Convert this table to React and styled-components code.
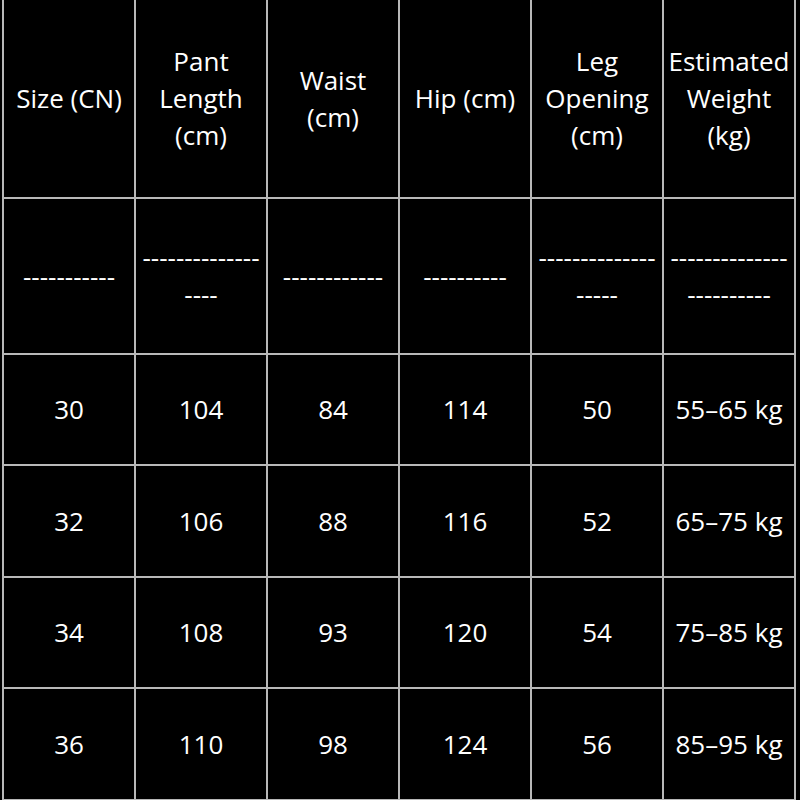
import React from "react";
import styled, { createGlobalStyle } from "styled-components";

const GlobalStyle = createGlobalStyle`
  html, body {
    margin: 0;
    padding: 0;
    background: #000;
  }
  body {
    width: 800px;
    height: 800px;
    overflow: hidden;
    font-family: "Open Sans", "Noto Sans", sans-serif;
  }
`;

const headers = [
  ["Size (CN)"],
  ["Pant", "Length", "(cm)"],
  ["Waist", "(cm)"],
  ["Hip (cm)"],
  ["Leg", "Opening", "(cm)"],
  ["Estimated", "Weight", "(kg)"],
];

// dashes as they wrap in each cell of the separator row
const dashes = [[11], [14, 4], [12], [10], [14, 5], [14, 10]];

const rows = [
  ["30", "104", "84", "114", "50", "55–65 kg"],
  ["32", "106", "88", "116", "52", "65–75 kg"],
  ["34", "108", "93", "120", "54", "75–85 kg"],
  ["36", "110", "98", "124", "56", "85–95 kg"],
];

const rowHeights = [111, 112, 111, 112];

const Wrapper = styled.div`
  width: 800px;
  height: 800px;
  padding-left: 2px;
  box-sizing: border-box;
  background: #000;
`;

const Table = styled.table`
  width: 794px;
  border-collapse: collapse;
  table-layout: fixed;
  color: #fff;
  font-size: 26px;
  line-height: 37px;
`;

const Row = styled.tr`
  height: ${(p) => p.$h}px;
`;

const Cell = styled.td`
  padding: 0;
  text-align: center;
  vertical-align: middle;
  border-left: 2px solid #b8b8b8;
  border-right: 2px solid #b8b8b8;
  border-bottom: 2px solid #b8b8b8;
  white-space: nowrap;
  letter-spacing: 0;
`;

const HeadCell = styled(Cell).attrs({ as: "th" })`
  font-weight: 400;
`;

const Line = styled.span`
  display: block;
`;

const App = () => {
  return (
    <Wrapper>
      <GlobalStyle />
      <Table>
        <thead>
          <Row $h={198}>
            {headers.map((lines, i) => (
              <HeadCell key={i}>
                {lines.map((l) => (
                  <Line key={l}>{l}</Line>
                ))}
              </HeadCell>
            ))}
          </Row>
        </thead>
        <tbody>
          <Row $h={156}>
            {dashes.map((counts, i) => (
              <Cell key={i}>
                {counts.map((n, j) => (
                  <Line key={j}>{"-".repeat(n)}</Line>
                ))}
              </Cell>
            ))}
          </Row>
          {rows.map((r, i) => (
            <Row key={i} $h={rowHeights[i]}>
              {r.map((v, j) => (
                <Cell key={j}>{v}</Cell>
              ))}
            </Row>
          ))}
        </tbody>
      </Table>
    </Wrapper>
  );
};

export default App;
